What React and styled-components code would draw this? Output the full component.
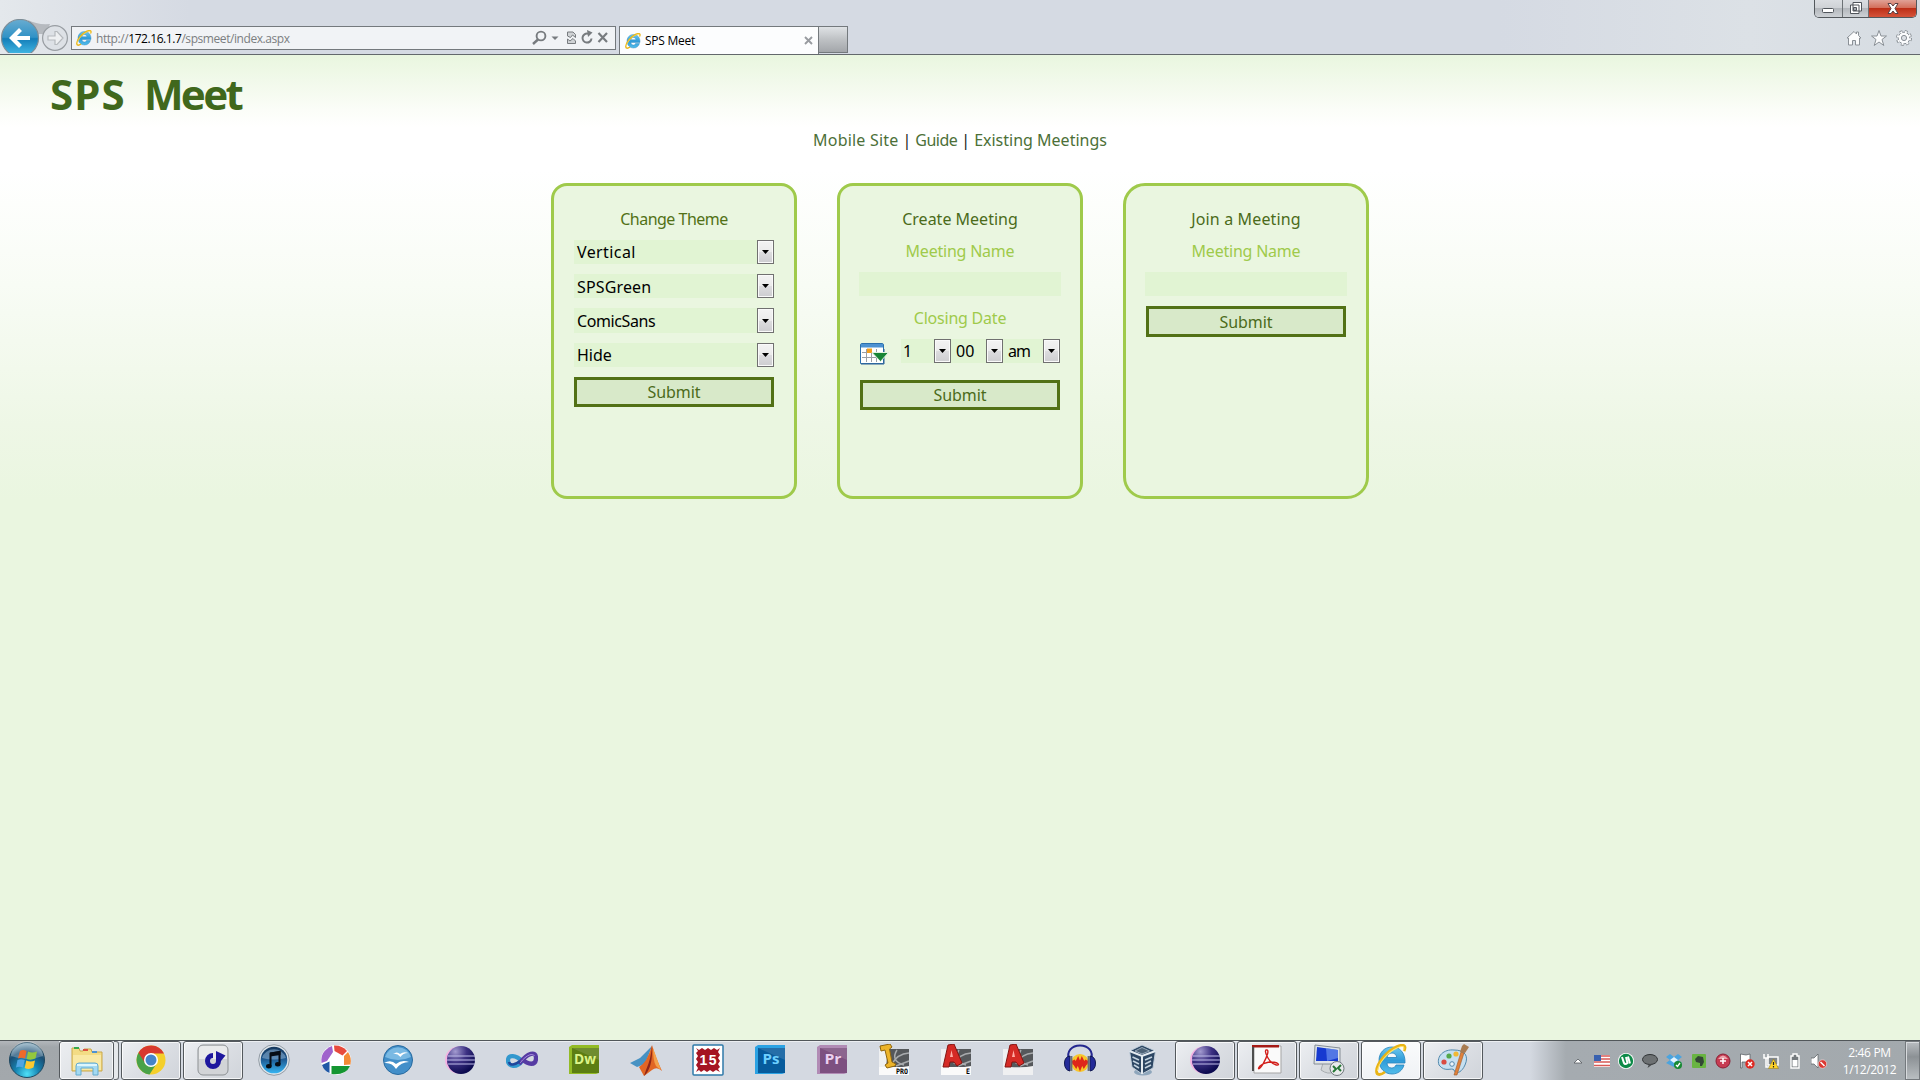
import React from "react";
import styled, { createGlobalStyle, css } from "styled-components";

const ui = `"Segoe UI", "Open Sans", "Noto Sans", sans-serif`;
const comic = `"Comic Sans MS", "Noto Sans", "Open Sans", sans-serif`;

const GlobalStyle = createGlobalStyle`
  * { box-sizing: border-box; }
  body { margin: 0; background: #eaf6e0; overflow: hidden; }
  svg { display: block; flex: none; }
`;

const Screen = styled.div`
  display: flex;
  flex-direction: column;
  width: 1920px;
  height: 1080px;
  overflow: hidden;
`;

/* ---------- browser frame ---------- */
const Chrome = styled.header`
  display: flex;
  align-items: flex-start;
  flex: none;
  height: 55px;
  padding-left: 1px;
  border-bottom: 1px solid #63686c;
  background: linear-gradient(90deg, #e4e8ec 0, #dde1e7 90px, #d5dae3 190px, #d5dae3 1500px, #dce1e6 1750px, #d6dce2 1920px);
`;
const NavButtons = styled.div`
  display: flex;
  width: 70px;
  height: 53px;
  padding-top: 19px;
  overflow: hidden;
`;
const AddressBar = styled.div`
  display: flex;
  align-items: center;
  width: 545px;
  height: 24px;
  margin-top: 26px;
  padding: 0 4px 0 4px;
  border: 1px solid #74797d;
  background: #f1f3f6;
`;
const Url = styled.div`
  flex: 1;
  margin: 1px 0 0 4px;
  color: #7b7e81;
  font: 12px/20px ${ui};
  letter-spacing: ${(p) => p.$track || "0"};
  white-space: nowrap;
  b { color: #000; font-weight: 400; }
`;
const AddressTools = styled.div`
  display: flex;
  align-items: center;
`;
const Tab = styled.div`
  display: flex;
  align-items: center;
  width: 200px;
  height: 28px;
  margin: 26px 0 0 3px;
  padding: 0 5px;
  border: 1px solid #74797d;
  border-bottom: 0;
  background: #fcfdfe;
`;
const TabTitle = styled.div`
  flex: 1;
  margin-left: 4px;
  color: #000;
  font: 12px/18px ${ui};
  letter-spacing: -0.25px;
`;
const NewTab = styled.div`
  width: 29px;
  height: 27px;
  margin-top: 26px;
  border: 1px solid #74797d;
  border-left: 0;
  background: linear-gradient(#dfe2e5, #bec1c4 50%, #a3a6aa);
`;
const FrameRight = styled.div`
  display: flex;
  flex-direction: column;
  align-items: flex-end;
  margin-left: auto;
`;
const WindowButtons = styled.div`
  display: flex;
  width: 103px;
  height: 18px;
  margin-right: 3px;
  border: 1px solid #53585c;
  border-top: 0;
  border-radius: 0 0 5px 5px;
  overflow: hidden;
`;
const WindowButton = styled.div`
  display: flex;
  align-items: ${(p) => (p.$low ? "flex-end" : "center")};
  justify-content: center;
  width: ${(p) => p.$w}px;
  padding-bottom: ${(p) => (p.$low ? 4 : 1)}px;
  border-right: ${(p) => (p.$close ? "0" : "1px solid #6c7175")};
  background: ${(p) =>
    p.$close
      ? "linear-gradient(#e0a296, #d4705c 45%, #bd2f17 50%, #d5533a)"
      : "linear-gradient(#dadde1, #cfd2d6 45%, #b3b7bc 50%, #cdd1d5)"};
`;
const FrameTools = styled.div`
  display: flex;
  gap: 9px;
  margin: 12px 8px 0 0;
`;

/* ---------- page ---------- */
const Page = styled.main`
  flex: 1;
  display: flex;
  flex-direction: column;
  align-items: center;
  background: linear-gradient(#e9f6df 0, #f1f9ea 25px, #fbfdf8 55px, #fff 72px, #fff 115px, #f8fcf5 230px, #eef7e6 370px, #eaf6e0 445px);
  font-family: ${comic};
`;
const Title = styled.h1`
  display: flex;
  gap: 18px;
  align-self: flex-start;
  margin: 10px 0 0 50px;
  color: #40681c;
  font-size: 42px;
  font-weight: 700;
  line-height: 58px;
`;
const TitleWord = styled.span`
  letter-spacing: ${(p) => p.$track};
`;
const Links = styled.nav`
  display: flex;
  justify-content: center;
  gap: 4px;
  height: 24px;
  margin-top: 5px;
  color: #16201a;
  font-size: 16px;
  line-height: 24px;
`;
const Link = styled.a`
  color: #4c7038;
  letter-spacing: ${(p) => p.$track || "0"};
`;
const Cards = styled.section`
  display: flex;
  gap: 40px;
  margin-top: 31px;
`;
const Card = styled.form`
  display: flex;
  flex-direction: column;
  align-items: center;
  width: 246px;
  height: 316px;
  padding-top: 20px;
  border: 3px solid #9fca4b;
  border-radius: ${(p) => p.$radius}px;
  background: #eaf6e0;
`;
const Heading = styled.h2`
  margin: 0;
  color: ${(p) => p.$color || "#4b6b1a"};
  font-size: 16px;
  font-weight: 400;
  line-height: 26px;
  letter-spacing: ${(p) => p.$track || "0"};
`;
const Label = styled.label`
  margin-top: ${(p) => p.$top}px;
  color: #9fca4b;
  font-size: 16px;
  line-height: 26px;
  letter-spacing: -0.22px;
`;
const Field = styled.div`
  width: 202px;
  height: 24px;
  margin-top: 8px;
  background: #e1f4d3;
`;
const SelectList = styled.div`
  display: grid;
  gap: 10px;
  margin-top: 8px;
`;
const SelectBox = styled.div`
  display: flex;
  align-items: stretch;
  justify-content: space-between;
  width: ${(p) => p.$w || 200}px;
  height: ${(p) => p.$h || 24}px;
  padding-left: ${(p) => p.$pad || 3}px;
  background: #e1f4d3;
  color: #000;
  font-size: 16px;
  line-height: ${(p) => p.$line || 25}px;
  letter-spacing: ${(p) => p.$track || "0"};
`;
const DropButton = styled.span`
  display: flex;
  align-items: center;
  justify-content: center;
  width: 17px;
  border: 1px solid #707070;
  box-shadow: inset 0 0 0 1px #fafafa;
  background: linear-gradient(#f3f3f3, #ebebeb 50%, #dddddf 50%, #cdcdd0);
`;
const TimeRow = styled.div`
  display: flex;
  width: 200px;
  height: 24px;
  margin-top: 8px;
`;
const CalendarSlot = styled.span`
  width: 41px;
  padding-top: 4px;
`;
const Submit = styled.button`
  width: 200px;
  height: ${(p) => p.$h || 30}px;
  margin-top: ${(p) => p.$top}px;
  padding: 0;
  border: 3px solid #527116;
  background: #d8e9c9;
  color: #4b6b1a;
  font: 16px/22px ${comic};
  letter-spacing: -0.1px;
`;

/* ---------- taskbar ---------- */
const Taskbar = styled.footer`
  display: flex;
  flex: none;
  height: 40px;
  border-top: 1px solid #51575a;
  background: #d4d9e1;
  box-shadow: inset 0 1px 0 #eceff2;
`;
const StartZone = styled.div`
  display: flex;
  width: 59px;
  padding-left: 8px;
  background: linear-gradient(#b3b7bb, #a2a7ab 6px, #a3a8ac);
`;
const raised = css`
  border: 1px solid #54595d;
  border-radius: 3px;
  box-shadow: inset 0 0 0 1px rgba(255, 255, 255, 0.75);
`;
const Task = styled.div`
  display: flex;
  align-items: center;
  justify-content: center;
  width: 60px;
  height: 39px;
  margin: 0 1px;
  padding: 0 2px 2px 0;
  ${(p) => p.$open && raised}
  ${(p) => p.$open && "padding-right: 0; background: linear-gradient(135deg, #edeff2, #dcdfe4 50%, #d0d4da);"}
  ${(p) => p.$active && "background: linear-gradient(#fafbfc, #eff2f5);"}
`;
const StackedTask = styled.div`
  display: flex;
  width: 61px;
  height: 39px;
`;
const StackFront = styled.div`
  display: flex;
  align-items: center;
  justify-content: center;
  width: 55px;
  padding-bottom: 2px;
  background: linear-gradient(135deg, #eceef1, #d6dade);
  ${raised}
`;
const StackEdge = styled.div`
  width: 5px;
  border: 1px solid #686d71;
  border-left: 0;
  border-radius: 0 3px 3px 0;
  background: #e5e8eb;
`;
const Tray = styled.div`
  display: flex;
  align-items: center;
  flex: 1;
  margin-left: 46px;
  background: linear-gradient(90deg, #d4d9e100 0, #a5abb0 36px, #a3a9ad);
`;
const TrayIcons = styled.div`
  display: flex;
  margin-left: 36px;
`;
const TrayIcon = styled.span`
  display: flex;
  justify-content: center;
  width: 24.1px;
`;
const Clock = styled.div`
  flex: 1;
  padding-left: 3px;
  color: #fff;
  text-align: center;
  font: 12px/17px ${ui};
  letter-spacing: -0.35px;
`;
const ShowDesktop = styled.div`
  align-self: stretch;
  width: 15px;
  border: 1px solid #74797d;
  box-shadow: inset 1px 1px 0 #d7dadd;
  background: linear-gradient(#b9bdc1, #8c9195 40%, #b9bec1);
`;

/* ---------- drawings ---------- */
const IeLogo = ({ size }) => (
  <svg width={size} height={size} viewBox="0 0 32 32">
    <defs>
      <linearGradient id="ieBlue" x2="0" y2="1">
        <stop offset="0" stopColor="#6fc9ee" /><stop offset=".5" stopColor="#2f9bd8" /><stop offset="1" stopColor="#53bdea" />
      </linearGradient>
    </defs>
    <path d="M17 3C9 3 4 9 4 16.500C4 24 9.500 30 17 30C23 30 27.500 26.500 29 21H21C20 23 18.800 24 16.800 24C13.800 24 12 22 12 19H30C30.500 9 25 3 17 3ZM12 13.500C12.400 11 14 9 17 9C19.800 9 21.500 11 21.700 13.500Z" fill="url(#ieBlue)" stroke="#2383bd" strokeWidth=".8" />
    <path d="M29 7C32 1 28 0 22 2.500C12 7 2 19 1.500 27C1.500 32 6 31 10 28" fill="none" stroke="#e9b416" strokeWidth="2.800" />
    <path d="M28.500 6C30 2 27 1.500 22 4C13 8 3.500 19 2.500 27" fill="none" stroke="#ffe36b" strokeWidth="1.100" />
  </svg>
);
const NavArrows = () => (
  <svg width="70" height="38" viewBox="1 19 70 38">
    <defs>
      <linearGradient id="backBlue" x2="0" y2="1">
        <stop offset="0" stopColor="#68acd0" /><stop offset=".48" stopColor="#3192c6" /><stop offset=".52" stopColor="#147eb9" /><stop offset="1" stopColor="#49c0ea" />
      </linearGradient>
    </defs>
    <path d="M28 20Q37 25 50 24L46 34H34Z" fill="#b6babf" />
    <circle cx="20" cy="38" r="18.500" fill="url(#backBlue)" stroke="#7e8d97" strokeWidth="1.200" />
    <path d="M30 38H12.500M20.500 29.500L12 38L20.500 46.500" fill="none" stroke="#fff" strokeWidth="4.200" />
    <circle cx="55" cy="38" r="12.400" fill="#dde1e6" stroke="#989da2" strokeWidth="1.200" />
    <path d="M48 36H55V31.500H57L63 38L57 44.500H55V40H48Z" fill="#eef0f2" stroke="#b5b9bd" strokeWidth="1.200" />
  </svg>
);
const SearchTools = () => (
  <svg width="80" height="18" viewBox="0 0 80 18" fill="none" stroke="#777b7f">
    <circle cx="10" cy="7" r="4.400" strokeWidth="1.900" />
    <path d="M7 10.500L2 15" strokeWidth="2.400" />
    <path d="M20.500 7.500H27.500L24 11Z" fill="#777b7f" stroke="none" />
    <path d="M36.500 7V3H42L44.500 5.500V8.500L41.500 6L39.500 8.500Z M36.500 10L39 12L42 9.500L44.500 12V14.500H36.500Z" strokeWidth="1" fill="#d0d3d6" />
    <path d="M60.500 9.500A4.500 4.500 0 1 1 57 4.700" strokeWidth="2" />
    <path d="M56 1L61.500 3.500L57 8Z" fill="#777b7f" stroke="none" />
    <path d="M67.500 4L76 13M76 4L67.500 13" strokeWidth="2.200" />
  </svg>
);
const CloseCross = () => (
  <svg width="9" height="9" viewBox="0 0 9 9"><path d="M1 1L8 8M8 1L1 8" stroke="#989ba0" strokeWidth="1.900" /></svg>
);
const FrameGlyph = ({ d }) => (
  <svg width="16" height="16" viewBox="0 0 16 16"><path d={d} fill="#fbfcfd" stroke="#8a9096" strokeWidth="1" strokeLinejoin="round" fillRule="evenodd" /></svg>
);
const Gear = () => (
  <svg width="16" height="16" viewBox="0 0 16 16">
    <circle cx="8" cy="8" r="6.400" fill="none" stroke="#8a9096" strokeWidth="3.200" strokeDasharray="2.700 2.330" />
    <circle cx="8" cy="8" r="5.800" fill="#fbfcfd" stroke="#8a9096" strokeWidth="1" />
    <circle cx="8" cy="8" r="6.100" fill="none" stroke="#fbfcfd" strokeWidth="2" strokeDasharray="1.900 2.890" strokeDashoffset="-.3" />
    <circle cx="8" cy="8" r="2.600" fill="#dce0e5" stroke="#8a9096" />
  </svg>
);
const Caret = () => (
  <svg width="7" height="4" viewBox="0 0 7 4"><path d="M0 0H7L3.500 4Z" fill="#000" /></svg>
);
const CalendarIcon = () => (
  <svg width="29" height="22" viewBox="0 0 29 22">
    <path d="M.5 2Q.5 .5 2 .5H22Q23.500 .5 23.500 2V20.500H.5Z" fill="#fff" stroke="#2b70ad" />
    <path d="M1 1H23V4.500H1Z" fill="#4d92d2" />
    <path d="M1 21H24V6" fill="none" stroke="#2f5f93" />
    <path d="M6.500 6V19M11.500 6V19M16.500 6V19M2 9.500H22M2 14.500H22" stroke="#9b9fa5" />
    <path d="M7 5.500H12V10H7Z" fill="#f3a01f" />
    <path d="M12 9.500H28.500L20.500 18.500Z" fill="#168435" stroke="#dff2df" />
  </svg>
);

const Svg32 = ({ children, size = 32 }) => <svg width={size} height={size} viewBox="0 0 32 32">{children}</svg>;

const StartOrb = () => (
  <svg width="38" height="38" viewBox="0 0 38 38">
    <defs>
      <radialGradient id="orb" cx=".5" cy=".9" r=".85">
        <stop offset="0" stopColor="#4ee0f8" /><stop offset=".4" stopColor="#1583b1" /><stop offset=".75" stopColor="#1b4e74" /><stop offset="1" stopColor="#7fa3b8" />
      </radialGradient>
    </defs>
    <circle cx="19" cy="19" r="17.500" fill="url(#orb)" stroke="#1f4860" />
    <path d="M3 15A16 15 0 0 1 35 15Q19 21 3 15Z" fill="#fff" opacity=".25" />
    <path d="M12 10Q15 8 18.500 10L17 17.500Q13.500 16 10 17.500Z" fill="#ef6a2b" />
    <path d="M20 10.500Q24 12.500 29 10.500L27.500 17.500Q23 19.500 18.700 18Z" fill="#93c83d" />
    <path d="M9.500 19Q13 17.500 16.800 19L15 26.500Q11.500 25 8 26.500Z" fill="#4fa5e3" />
    <path d="M18.300 19.500Q22.500 21.500 27 19.500L25.500 26.500Q21 29 16.700 27Z" fill="#fcc931" />
  </svg>
);
const ExplorerIcon = () => (
  <Svg32>
    <path d="M1 4H8L9 7H12L13 5H20L21 8H31V27H1Z" fill="#f3dc85" stroke="#c9a748" />
    <path d="M3 3H8V5H3Z" fill="#35a84c" /><path d="M12 5H17V7H12Z" fill="#da5140" /><path d="M21 7H26V9H21Z" fill="#4d93d2" />
    <path d="M2 11H30V26H2Z" fill="#f9e9a5" />
    <path d="M5 31V22Q5 19 8 19H24Q27 19 27 22V31H22V24H10V31Z" fill="#a4daf2" stroke="#65abcf" />
    <path d="M6 20H26V22H6Z" fill="#ddf6fd" />
  </Svg32>
);
const ChromeIcon = () => (
  <Svg32>
    <circle cx="16" cy="16" r="14.500" fill="#f4cf2b" />
    <path d="M16 16L3.500 8.700A14.500 14.500 0 0 0 14.500 30.400L22 19Z" fill="#49a248" />
    <path d="M16 9.500H29A14.500 14.500 0 0 0 3.500 8.700L10 19Z" fill="#d7382e" />
    <circle cx="16" cy="16" r="7" fill="#fff" /><circle cx="16" cy="16" r="5.500" fill="#4584c8" />
  </Svg32>
);
const RdioIcon = () => (
  <Svg32>
    <rect x="1" y="1" width="30" height="30" rx="5" fill="#d2d4d7" stroke="#8d9194" />
    <path d="M2 4Q3 2 5 2H27Q29 2 30 4V15H2Z" fill="#fff" opacity=".5" />
    <path d="M16 11.500A5.500 5.500 0 1 0 21.500 17V11" fill="none" stroke="#1d169e" strokeWidth="5" />
    <path d="M19 7L28.500 11.500L24 17L19 15Z" fill="#1d169e" />
  </Svg32>
);
const ItunesIcon = () => (
  <Svg32>
    <defs><linearGradient id="tune" x2="0" y2="1"><stop offset="0" stopColor="#16375b" /><stop offset=".45" stopColor="#1d568e" /><stop offset="1" stopColor="#35b4f2" /></linearGradient></defs>
    <circle cx="16" cy="16" r="15.300" fill="#dfe5ea" stroke="#7f8993" strokeWidth=".8" />
    <circle cx="16" cy="16" r="13.300" fill="url(#tune)" />
    <path d="M4 14A12.500 12 0 0 1 28 14Q16 17 4 14Z" fill="#a9c9e6" opacity=".45" />
    <path d="M12.500 22V9.500L21.500 8V20" fill="none" stroke="#070d15" strokeWidth="2" />
    <path d="M12 8.500L22.500 7V11L12 12.500Z" fill="#070d15" />
    <ellipse cx="10.800" cy="22.300" rx="2.800" ry="2.200" fill="#070d15" /><ellipse cx="19.800" cy="20.300" rx="2.800" ry="2.200" fill="#070d15" />
  </Svg32>
);
const PicasaIcon = () => (
  <Svg32>
    <circle cx="16" cy="16" r="15" fill="#fff" />
    <path d="M12 2L13 8L7 17L1.500 19Q0 7 12 2Z" fill="#9f63cc" />
    <path d="M14 1.500Q22 1 27 7L22.500 11.500L14.500 7Z" fill="#e74a3c" />
    <path d="M28 8Q32 14 30.500 20.500L24 21V12Z" fill="#f48b35" />
    <path d="M30 22Q26 31.500 11.500 30V22Z" fill="#159631" />
    <path d="M2 21L9.500 17.500V29Q4 27 2 21Z" fill="#2058a5" />
  </Svg32>
);
const OpenOfficeIcon = () => (
  <Svg32>
    <circle cx="16" cy="16" r="14.500" fill="#438fc9" stroke="#286a9f" />
    <path d="M3 13A13.500 13.500 0 0 1 29 13Q16 19 3 13Z" fill="#7ab9e3" />
    <path d="M11 10Q15 7 18 10Q22 7 26 9Q21 9 18.500 13Q15 9 11 10Z" fill="#fff" />
    <path d="M2 19Q9 15 14 20Q20 15 27 18Q19 18 14 25Q10 18 2 19Z" fill="#fff" />
  </Svg32>
);
const EclipseIcon = ({ id }) => (
  <Svg32>
    <defs><radialGradient id={id} cx=".3" cy=".2" r=".8"><stop offset="0" stopColor="#a39bd0" /><stop offset=".5" stopColor="#3d3183" /><stop offset="1" stopColor="#0c0b50" /></radialGradient></defs>
    <circle cx="14.500" cy="16" r="13.500" fill="#f4b2e2" />
    <circle cx="17" cy="16" r="14" fill={`url(#${id})`} />
    <path d="M4 12H31M3 16H31M4 20H31" stroke="#bfbde9" strokeWidth="1.100" />
  </Svg32>
);
const VsIcon = () => (
  <Svg32>
    <path d="M16 17C11 24 2 23 2 16.500C2 10 10 11 16 17" fill="none" stroke="#3298ce" strokeWidth="4.300" />
    <path d="M13 20C22 8 30 7 30 14C30 22 22 21 16 15" fill="none" stroke="#563ba3" strokeWidth="4.300" />
    <path d="M14 19C21 10 27 9 28.500 12" fill="none" stroke="#a98dde" strokeWidth="1" />
    <path d="M3 18C4 22 9 21 14 17" fill="none" stroke="#20479c" strokeWidth="2.500" />
  </Svg32>
);
const AdobeTile = ({ text, bg, edge, fg }) => (
  <Svg32>
    <path d="M1 3L4 1H31V29L28 30H1Z" fill={edge} />
    <path d="M4 4H31V29H4Z" fill={bg} /><path d="M4 4H31V16Z" fill="#fff" opacity=".12" />
    <text x="17" y="20" fill={fg} fontFamily="Open Sans" fontSize="14" fontWeight="700" textAnchor="middle" textLength={text === "Dw" ? 22 : 17} lengthAdjust="spacingAndGlyphs">{text}</text>
  </Svg32>
);
const MatlabIcon = () => (
  <Svg32>
    <path d="M0 19L10 14L22 2L15 20L7 23Z" fill="#4792c3" />
    <path d="M9 23Q17 19 22 1Q25 12 32 27Q27 22 22 26L14 32Z" fill="#e16624" />
    <path d="M22 2Q21 15 16 26L14 32Q23 24 22 2Z" fill="#8e2618" /><path d="M23 4Q23 17 26 22Q28 24 31 26Z" fill="#f3a14b" />
  </Svg32>
);
const FifteenIcon = () => (
  <Svg32>
    <rect x="1" y="1" width="30" height="30" rx="1" fill="#fff" stroke="#2f7aa9" strokeWidth="1.500" />
    <path d="M4 4L7 6L10 4L13 6L16 4L19 6L22 4L25 6L28 4L26 8L28 11L26 14L28 17L26 20L28 23L26 25L28 28L24 26L21 28L18 26L15 28L12 26L9 28L7 26L4 28L6 24L4 21L6 18L4 15L6 12L4 9L6 7Z" fill="#a51422" />
    <text x="16" y="21" fontFamily="Liberation Sans" fontSize="14" fontWeight="700" fill="#fff" textAnchor="middle" textLength="17">15</text>
  </Svg32>
);
const AutodeskTile = ({ letter, tag }) => (
  <Svg32>
    <path d="M1 5H31V31H1Z" fill="#eff0f1" /><path d="M10 5H31V22Q22 24 8 23Z" fill="#55585b" />
    <path d="M19 6Q12 17 26 21M14 20Q19 10 31 9M18 22L31 17" fill="none" stroke="#a8abad" strokeWidth="1.500" />
    {tag && <g><path d="M1 23H31V31H1Z" fill="#fafafa" /><text x="30" y="29.500" fontFamily="DejaVu Sans Mono" fontSize="7.500" fontWeight="700" textAnchor="end" textLength={tag.length * 4} lengthAdjust="spacingAndGlyphs">{tag}</text></g>}
    {letter === "I" ? (
      <path d="M2 2L12 0L14 3L11.500 5L14 18L18 20L17 22L9 24L7 21L10 19L7 6L3 7Z" fill="#edb42a" stroke="#8e650f" />
    ) : (
      <g><path d="M3 23L8 1L14 0L22 19L17 22L14 18H10L9 23Z" fill="#d52a25" stroke="#841512" /><path d="M10 13H13L11.500 6Z" fill="#ffaca3" /></g>
    )}
  </Svg32>
);
const AudacityIcon = () => (
  <Svg32>
    <ellipse cx="16" cy="19" rx="9" ry="9" fill="#f7c62a" />
    <path d="M8 19L10 18L12 21L14 17L16 22L18 17L20 21L22 18L24 19" fill="none" stroke="#df261a" strokeWidth="4" />
    <path d="M5 16C2 7 8 1.500 16 1.500S30 7 27 16" fill="none" stroke="#24278f" strokeWidth="2" />
    <path d="M.5 19Q.5 13 6 12V27Q.5 26 .5 19ZM31.500 19Q31.500 13 26 12V27Q31.500 26 31.500 19Z" fill="#242b99" stroke="#101852" />
    <path d="M7.500 12V27M24.500 12V27" stroke="#6a6e74" strokeWidth="1.800" />
  </Svg32>
);
const VirtualBoxIcon = () => (
  <Svg32>
    <ellipse cx="17" cy="28" rx="9" ry="3.500" fill="#8ea6bc" />
    <path d="M3.500 7L16 1L29.500 7L27 24L16 30L6 23Z" fill="#2c4663" stroke="#c1cedb" />
    <path d="M3.500 7L16 12L29.500 7M16 12V30" stroke="#e3eaf0" strokeWidth="2" fill="none" />
    <path d="M6.500 13L13 16M7 17L13 20M8 21L13 24M19 16L26 13M19 20L25 17M19 24L25 21" stroke="#c3d2df" strokeWidth="1.600" fill="none" />
    <path d="M9 7L16 3.500L23.500 7L16 10Z" fill="#4d6277" stroke="#98a9b9" />
  </Svg32>
);
const PdfIcon = () => (
  <Svg32>
    <path d="M3 2H30V29H3Z" fill="#fafafa" stroke="#a5a5a5" /><path d="M1 1H28V3.500H1Z" fill="#a51915" /><path d="M2 3V27" stroke="#4d4d4d" strokeWidth="2" />
    <path d="M15 6C19 5 16 13 12 20C8 27 6 25 9 22C13 18 21 17 26 19C31 22 22 23 17 14C14 9 14 7 15 6Z" fill="none" stroke="#d21e1a" strokeWidth="1.400" />
  </Svg32>
);
const RemoteIcon = () => (
  <Svg32>
    <path d="M8 26L10 19H18L21 28Q15 31 8 26Z" fill="#d3d6d8" stroke="#a7acb0" />
    <path d="M2 1L27 4V20L1 20Z" fill="#dfe4e8" stroke="#858d95" /><path d="M4 3L25 6V17L3 17Z" fill="#173ad0" /><path d="M13 4L25 6V14L14 17Z" fill="#7198ef" opacity=".65" />
    <circle cx="24" cy="24.500" r="7" fill="#e8eaeb" stroke="#6e767c" /><path d="M20 22L23 25L20 28M28 21L25 24L28 27" stroke="#247634" strokeWidth="2" fill="none" />
  </Svg32>
);
const PaintIcon = () => (
  <Svg32>
    <path d="M2 21C-1 12 7 5 17 6C28 6 32 12 28 21C24 30 18 30 17 26C15 23 8 29 2 21Z" fill="#c6e0f1" stroke="#5189ad" />
    <circle cx="7" cy="18" r="2.600" fill="#d94b42" /><circle cx="12" cy="12" r="2.600" fill="#53a84a" /><circle cx="19" cy="10" r="2.600" fill="#f1b934" /><circle cx="15" cy="20" r="2.300" fill="#eef5fa" stroke="#5488ab" />
    <path d="M17 31L24 8L27 9L20 31Z" fill="#e0813b" stroke="#995b2d" strokeWidth=".6" /><path d="M23 8L25 2L27 0L32 3L28 9Z" fill="#a97c52" />
  </Svg32>
);

const tasks = [
  { open: true, icon: <ChromeIcon /> },
  { open: true, icon: <RdioIcon /> },
  { icon: <ItunesIcon /> },
  { icon: <PicasaIcon /> },
  { icon: <OpenOfficeIcon /> },
  { icon: <EclipseIcon id="eclA" /> },
  { icon: <VsIcon /> },
  { icon: <AdobeTile text="Dw" bg="#5c7e13" edge="#93bb26" fg="#dcf588" /> },
  { icon: <MatlabIcon /> },
  { icon: <FifteenIcon /> },
  { icon: <AdobeTile text="Ps" bg="#075b9c" edge="#2ba2e3" fg="#6ed0ff" /> },
  { icon: <AdobeTile text="Pr" bg="#7d5080" edge="#b18bb5" fg="#ebd0ef" /> },
  { icon: <AutodeskTile letter="I" tag="PRO" /> },
  { icon: <AutodeskTile letter="A" tag="E" /> },
  { icon: <AutodeskTile letter="A" /> },
  { icon: <AudacityIcon /> },
  { icon: <VirtualBoxIcon /> },
  { open: true, icon: <EclipseIcon id="eclB" /> },
  { open: true, icon: <PdfIcon /> },
  { open: true, icon: <RemoteIcon /> },
  { open: true, active: true, icon: <IeLogo size={32} /> },
  { open: true, icon: <PaintIcon /> },
];

const trayDrawings = [
  <path d="M4 10H12L8 6Z" fill="#fff" stroke="#555b60" strokeWidth=".8" />,
  <g><path d="M0 2H16V14H0Z" fill="#fff" /><path d="M0 3H16M0 6H16M0 9H16M0 12.500H16" stroke="#d85a55" strokeWidth="1.500" /><path d="M0 2H7V8H0Z" fill="#3961b0" /></g>,
  <g><circle cx="8" cy="8" r="8" fill="#fff" /><circle cx="8" cy="8" r="7.200" fill="#0d8a48" /><path d="M4 4L6 10Q7 12 9.500 10L8 4M10 3.500L12 10.500" stroke="#fff" strokeWidth="2" fill="none" /></g>,
  <g><ellipse cx="8" cy="6.500" rx="7.500" ry="5" fill="#6d7173" stroke="#303335" /><path d="M7 11L5.500 15L11 11" fill="#45494b" /></g>,
  <g><path d="M0 4L4 1L8 4L12 1L16 4L12 7L16 10L8 14L0 10L4 7Z" fill="#4aa4df" /><path d="M8 4L12 7L8 10L4 7Z" fill="#e2f4ff" /><circle cx="12" cy="12" r="4" fill="#198a34" /><path d="M10 12L11.500 13.500L14 10" stroke="#fff" strokeWidth="1.400" fill="none" /></g>,
  <g><rect x="1" y="1" width="14" height="14" rx="1" fill="#69b442" /><path d="M4 6L7 3L12 4L13 9L11 13H9V10L5 9Z" fill="#344736" /></g>,
  <g><circle cx="8" cy="8" r="7" fill="#c63c52" stroke="#8b2034" /><path d="M3 6Q8 -1 13 6Z" fill="#eca6ae" /><path d="M8 5V11M5 8H11" stroke="#fff" strokeWidth="1.500" /></g>,
  <g><path d="M1.500 15V1L7 2L11 1V9L6 9H3V15Z" fill="#fff" stroke="#4f5559" strokeWidth=".7" /><circle cx="11" cy="11" r="4.700" fill="#dd2922" /><path d="M9 9L13 13M13 9L9 13" stroke="#fff" strokeWidth="1.500" /></g>,
  <g><path d="M5 4H15V12H5Z" fill="#81878b" stroke="#fff" strokeWidth="1.500" /><path d="M1 1V5H5V1M3 5V14H7" fill="none" stroke="#fff" strokeWidth="1.500" /><path d="M10.500 6L15.500 15.500H5.500Z" fill="#ffd42a" stroke="#8f7415" strokeWidth=".5" /><path d="M10.500 9V12M10.500 13V14.500" stroke="#222" strokeWidth="1.200" /></g>,
  <g><path d="M6 1H10V3H12V15H4V3H6Z" fill="#747a7e" stroke="#fff" strokeWidth="1.400" /><path d="M5.500 7H10.500V13.500H5.500Z" fill="#fff" /></g>,
  <g><path d="M0 5H3L7 1V15L3 11H0Z" fill="#fff" stroke="#565b5f" strokeWidth=".7" /><circle cx="11.500" cy="11" r="4.200" fill="#db3832" stroke="#fff" strokeWidth=".5" /><path d="M9.500 9L13.500 13" stroke="#fff" strokeWidth="1.400" /></g>,
];

const Select = ({ children, ...rest }) => (
  <SelectBox {...rest}>
    <span>{children}</span>
    <DropButton><Caret /></DropButton>
  </SelectBox>
);

export default function App() {
  return (
    <Screen>
      <GlobalStyle />
      <Chrome>
        <NavButtons><NavArrows /></NavButtons>
        <AddressBar>
          <IeLogo size={16} />
          <Url $track="-0.43px">http://<b>172.16.1.7</b>/spsmeet/index.aspx</Url>
          <AddressTools><SearchTools /></AddressTools>
        </AddressBar>
        <Tab>
          <IeLogo size={16} />
          <TabTitle>SPS Meet</TabTitle>
          <CloseCross />
        </Tab>
        <NewTab />
        <FrameRight>
          <WindowButtons>
            <WindowButton $w={28} $low><svg width="12" height="5" viewBox="0 0 12 5"><rect x=".5" y=".5" width="11" height="4" rx="1" fill="#fff" stroke="#50555b" /></svg></WindowButton>
            <WindowButton $w={27}><svg width="12" height="12" viewBox="0 0 12 12"><path d="M3 .5H11.500V9H3Z M.5 3H9V11.500H.5Z" fill="#fff" stroke="#50555b" /><path d="M3.500 5.500H6.500V8.500H3.500Z" fill="#a3a8ae" stroke="#50555b" /></svg></WindowButton>
            <WindowButton $w={47} $close><svg width="12" height="11" viewBox="0 0 12 11"><path d="M1 .5H4L6 3L8 .5H11L8 5.500L11 10.500H8L6 8L4 10.500H1L4 5.500Z" fill="#fff" stroke="#574045" /></svg></WindowButton>
          </WindowButtons>
          <FrameTools>
            <FrameGlyph d="M1 8L8 1.500L10.500 4V2H12.500V5.500L15 8H13.500V15H9.500V10.500H6.500V15H2.500V8Z" />
            <FrameGlyph d="M8 .5L10 6H15.500L11 9.500L12.800 15.500L8 12L3.200 15.500L5 9.500L.5 6H6Z" />
            <Gear />
          </FrameTools>
        </FrameRight>
      </Chrome>

      <Page>
        <Title>
          <TitleWord $track="1.2px">SPS</TitleWord>
          <TitleWord $track="-2.7px">Meet</TitleWord>
        </Title>
        <Links>
          <Link $track="0.2px">Mobile Site</Link><span>|</span>
          <Link $track="-0.5px">Guide</Link><span>|</span>
          <Link>Existing Meetings</Link>
        </Links>
        <Cards>
          <Card $radius={16}>
            <Heading $color="#527116" $track="-0.5px">Change Theme</Heading>
            <SelectList>
              <Select $track="0.4px">Vertical</Select>
              <Select $track="0.15px" $line={27}>SPSGreen</Select>
              <Select $h={25} $line={26} $track="-0.4px">ComicSans</Select>
              <Select>Hide</Select>
            </SelectList>
            <Submit type="button" $top={10}>Submit</Submit>
          </Card>
          <Card $radius={16}>
            <Heading>Create Meeting</Heading>
            <Label $top={6}>Meeting Name</Label>
            <Field />
            <Label $top={9}>Closing Date</Label>
            <TimeRow>
              <CalendarSlot><CalendarIcon /></CalendarSlot>
              <Select $w={50} $pad={2}>1</Select>
              <Select $w={52} $pad={5}>00</Select>
              <Select $w={57} $pad={5} $track="-1px">am</Select>
            </TimeRow>
            <Submit type="button" $top={17}>Submit</Submit>
          </Card>
          <Card $radius={22}>
            <Heading $track="0.15px">Join a Meeting</Heading>
            <Label $top={6}>Meeting Name</Label>
            <Field />
            <Submit type="button" $top={10} $h={31}>Submit</Submit>
          </Card>
        </Cards>
      </Page>

      <Taskbar>
        <StartZone><StartOrb /></StartZone>
        <StackedTask>
          <StackFront><ExplorerIcon /></StackFront>
          <StackEdge />
        </StackedTask>
        {tasks.map((t, i) => (
          <Task key={i} $open={t.open} $active={t.active}>{t.icon}</Task>
        ))}
        <Tray>
          <TrayIcons>
            {trayDrawings.map((d, i) => (
              <TrayIcon key={i}><svg width="16" height="16" viewBox="0 0 16 16">{d}</svg></TrayIcon>
            ))}
          </TrayIcons>
          <Clock>2:46 PM<br />1/12/2012</Clock>
          <ShowDesktop />
        </Tray>
      </Taskbar>
    </Screen>
  );
}
